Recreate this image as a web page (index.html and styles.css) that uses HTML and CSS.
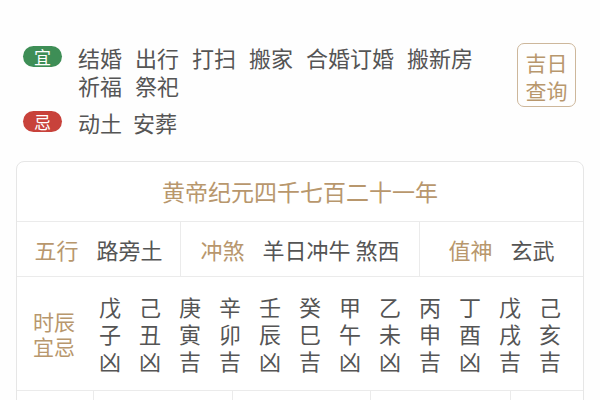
FILE: index.html
```html
<!DOCTYPE html>
<html lang="zh">
<head>
<meta charset="utf-8">
<link rel="stylesheet" href="styles.css">
</head>
<body>
<div class="page">
  <div class="top">
    <div class="yiji">
      <div class="yj-row">
        <span class="badge yi">宜</span>
        <div class="words">
          <span>结婚</span><span>出行</span><span>打扫</span><span>搬家</span><span>合婚订婚</span><span>搬新房</span><span>祈福</span><span>祭祀</span>
        </div>
      </div>
      <div class="yj-row ji-row">
        <span class="badge ji">忌</span>
        <div class="words tight">
          <span>动土</span><span>安葬</span>
        </div>
      </div>
    </div>
    <div class="btn">吉日<br>查询</div>
  </div>

  <div class="card">
    <div class="title">黄帝纪元四千七百二十一年</div>
    <div class="info">
      <div class="cell c1"><span class="lab">五行</span><span class="val">路旁土</span></div>
      <div class="cell c2"><span class="lab">冲煞</span><span class="val">羊日冲牛 煞西</span></div>
      <div class="cell c3"><span class="lab">值神</span><span class="val">玄武</span></div>
    </div>
    <div class="hours">
      <div class="hlab">时辰<br>宜忌</div>
      <div class="hgrid">
        <div class="h">戊<br>子<br>凶</div>
        <div class="h">己<br>丑<br>凶</div>
        <div class="h">庚<br>寅<br>吉</div>
        <div class="h">辛<br>卯<br>吉</div>
        <div class="h">壬<br>辰<br>凶</div>
        <div class="h">癸<br>巳<br>吉</div>
        <div class="h">甲<br>午<br>凶</div>
        <div class="h">乙<br>未<br>凶</div>
        <div class="h">丙<br>申<br>吉</div>
        <div class="h">丁<br>酉<br>凶</div>
        <div class="h">戊<br>戌<br>吉</div>
        <div class="h">己<br>亥<br>吉</div>
      </div>
    </div>
    <div class="bottom">
      <div class="b b1"></div>
      <div class="b b2"></div>
      <div class="b b3"></div>
      <div class="b b4"></div>
      <div class="b b5"></div>
    </div>
  </div>
</div>
</body>
</html>
```

FILE: styles.css
```css
html, body {
  margin: 0;
  padding: 0;
  background: #fefefe;
}
body {
  font-family: "Noto Sans CJK SC", "Noto Sans", sans-serif;
  color: #555;
}
.page {
  width: 600px;
  height: 400px;
  overflow: hidden;
}
.top {
  display: flex;
  padding: 43px 24px 0 23px;
}
.yiji {
  flex: 1;
}
.yj-row {
  display: flex;
  align-items: flex-start;
}
.ji-row {
  margin-top: 9px;
}
.badge {
  width: 39px;
  height: 21px;
  margin-top: 3px;
  border-radius: 11px;
  color: #fff;
  font-size: 17px;
  line-height: 21px;
  text-align: center;
  flex: none;
}
.yi { background: #3e8e56; }
.ji { background: #c8423b; }
.words {
  margin-left: 16px;
  display: flex;
  flex-wrap: wrap;
  column-gap: 13px;
  font-size: 22px;
  line-height: 28px;
  width: 420px;
}
.words.tight { column-gap: 11px; }
.btn {
  width: 57px;
  border: 1px solid #cdb79b;
  border-radius: 7px;
  color: #b8976d;
  font-size: 21px;
  line-height: 28px;
  text-align: center;
  padding-top: 4px;
  height: 58px;
}
.card {
  margin: 25px 16px 0 16px;
  border: 1px solid #e6e6e6;
  border-radius: 8px;
  background: #fff;
}
.title {
  height: 59px;
  line-height: 59px;
  text-align: center;
  color: #b8976d;
  font-size: 23px;
  border-bottom: 1px solid #ebebeb;
}
.info {
  display: grid;
  grid-template-columns: 163px 239px 1fr;
  height: 54px;
  border-bottom: 1px solid #ebebeb;
}
.cell {
  display: flex;
  align-items: center;
  justify-content: center;
  gap: 18px;
  font-size: 22px;
}
.c2, .c3 { border-left: 1px solid #ebebeb; }
.lab { color: #b8976d; }
.hours {
  display: flex;
  align-items: center;
  height: 113px;
  padding-left: 16px;
  border-bottom: 1px solid #ebebeb;
}
.hlab {
  color: #b8976d;
  font-size: 21px;
  line-height: 25px;
  width: 44px;
}
.hgrid {
  margin-left: 13px;
  display: grid;
  grid-template-columns: repeat(12, 40px);
  font-size: 22px;
  line-height: 27px;
}
.h { text-align: center; }
.bottom {
  display: grid;
  grid-template-columns: 76px 139px 138px 140px 1fr;
  height: 40px;
}
.b + .b { border-left: 1px solid #ebebeb; }
```
